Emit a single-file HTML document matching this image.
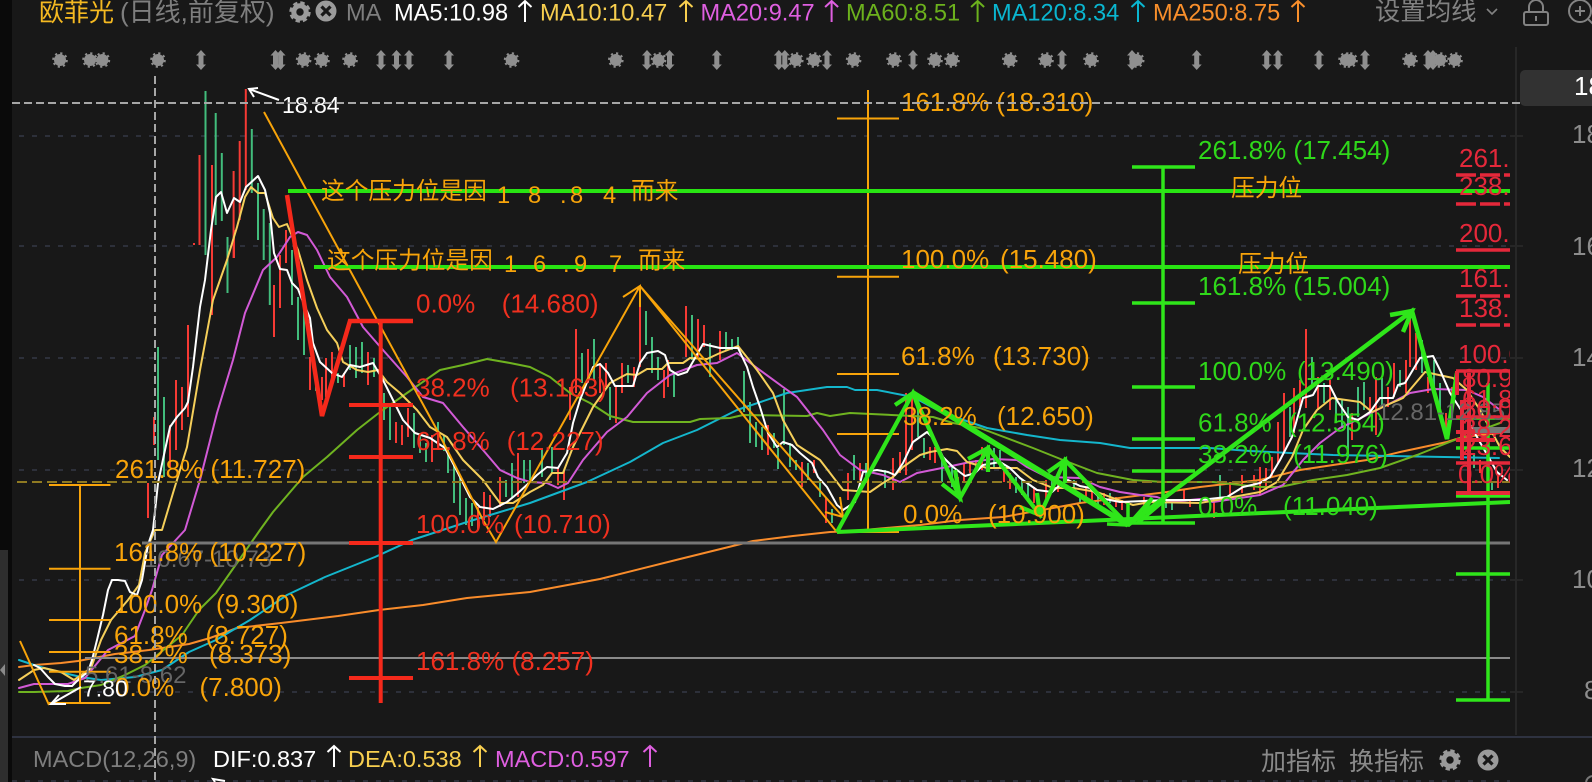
<!DOCTYPE html>
<html><head><meta charset="utf-8"><title>欧菲光</title>
<style>
html,body{margin:0;padding:0;background:#181818;overflow:hidden}
svg{display:block}
text{font-family:"Liberation Sans","Noto Sans CJK SC",sans-serif;white-space:pre}
.f{font-size:26px}
.o{fill:#f8a40a}.r{fill:#f0301f}.g{fill:#2fd81a}.c{fill:#e5283a;font-size:26px}
.h{font-size:23.6px}
.l{fill:none;stroke-linejoin:round;stroke-linecap:round}
</style></head><body>
<svg xmlns="http://www.w3.org/2000/svg" width="1592" height="782" viewBox="0 0 1592 782">
<defs>
<clipPath id="cp"><rect x="12" y="40" width="1498" height="700"/></clipPath>
<g id="s"><circle r="6" fill="#8f8f8f"/><circle r="6.8" fill="none" stroke="#8f8f8f" stroke-width="2" stroke-dasharray="2.2 3.14"/></g>
<polygon id="a" points="0,-10 5,-4.500 2.500,-4.500 2.500,4.500 5,4.500 0,10 -5,4.500 -2.500,4.500 -2.500,-4.500 -5,-4.500" fill="#8f8f8f"/>
<path id="u" d="M0 22V1M-6.500 7L0 1L6.500 7" fill="none" stroke="currentColor" stroke-width="2"/>
<g id="gear"><circle r="6.2" fill="none" stroke="#9a9a9a" stroke-width="5"/><circle r="9" fill="none" stroke="#9a9a9a" stroke-width="3.4" stroke-dasharray="4.2 2.87"/></g>
<g id="x"><circle r="10.5" fill="#9a9a9a"/><path d="M-4.500 -4.500L4.500 4.500M4.500 -4.500L-4.500 4.500" stroke="#181818" stroke-width="3.2"/></g>
</defs>
<rect width="1592" height="782" fill="#181818"/>
<rect x="0" y="0" width="12" height="782" fill="#0a0a0a"/>
<rect x="0" y="550" width="8" height="232" fill="#2e2e2e"/>
<polygon points="5,664 5,676 0,670" fill="#8a8a8a"/>

<!-- grid -->
<g stroke="#343845" stroke-width="1.5" stroke-dasharray="5 8" fill="none">
<path d="M19 136H1510M19 246H1510M19 358H1510M19 470H1510M19 580H1510M19 692H1510M12 781H1510"/>
</g>
<path d="M1510 136H1523M1510 246H1523M1510 358H1523M1510 470H1523M1510 580H1523M1510 692H1523" stroke="#2a2a2a" stroke-width="1.5"/>
<path d="M1516 47V735" stroke="#272727" stroke-width="2"/>
<path d="M12 737H1592" stroke="#2e3240" stroke-width="2"/>

<!-- marks -->
<g>
<use href="#s" x="60" y="60"/><use href="#s" x="90" y="60"/><use href="#s" x="102.4" y="60"/><use href="#s" x="158" y="60"/><use href="#a" x="201" y="60"/><use href="#a" x="275.5" y="60"/><use href="#a" x="280.6" y="60"/><use href="#s" x="303.6" y="60"/><use href="#s" x="322" y="60"/><use href="#s" x="350" y="60"/><use href="#a" x="381" y="60"/><use href="#a" x="396.5" y="60"/><use href="#a" x="409" y="60"/><use href="#a" x="449" y="60"/><use href="#s" x="511.6" y="60"/><use href="#s" x="615.8" y="60"/><use href="#a" x="647" y="60"/><use href="#s" x="658.5" y="60"/><use href="#a" x="669.5" y="60"/><use href="#a" x="716.8" y="60"/><use href="#a" x="778.8" y="60"/><use href="#a" x="784.8" y="60"/><use href="#s" x="795.8" y="60"/><use href="#s" x="814" y="60"/><use href="#a" x="827" y="60"/><use href="#s" x="853.6" y="60"/><use href="#s" x="894" y="60"/><use href="#a" x="913" y="60"/><use href="#s" x="935" y="60"/><use href="#s" x="952" y="60"/><use href="#s" x="1009.7" y="60"/><use href="#s" x="1046" y="60"/><use href="#a" x="1062" y="60"/><use href="#s" x="1091" y="60"/><use href="#a" x="1132" y="60"/><use href="#s" x="1136.7" y="60"/><use href="#a" x="1196.7" y="60"/><use href="#a" x="1266.7" y="60"/><use href="#a" x="1278" y="60"/><use href="#a" x="1319" y="60"/><use href="#s" x="1346" y="60"/><use href="#s" x="1350" y="60"/><use href="#a" x="1365" y="60"/><use href="#s" x="1410" y="60"/><use href="#a" x="1428" y="60"/><use href="#a" x="1433" y="60"/><use href="#s" x="1440" y="60"/><use href="#s" x="1455" y="60"/>
</g>

<!-- header -->
<text x="39" y="21" font-size="25" fill="#f5b921">欧菲光</text>
<text x="120" y="21" font-size="26" fill="#7e7e7e">(日线,前复权)</text>
<use href="#gear" x="300" y="12"/><use href="#x" x="326" y="11"/>
<text x="346" y="20.5" class="h" fill="#7e7e7e">MA</text>
<text x="394" y="20.5" class="h" fill="#fff">MA5:10.98</text><use href="#u" x="525" y="0" color="#fff"/>
<text x="540" y="20.5" class="h" fill="#f8cf4f">MA10:10.47</text><use href="#u" x="686" y="0" color="#f8cf4f"/>
<text x="700.5" y="20.5" class="h" fill="#df5fe0">MA20:9.47</text><use href="#u" x="831.6" y="0" color="#df5fe0"/>
<text x="846" y="20.5" class="h" fill="#6cb21d">MA60:8.51</text><use href="#u" x="977.6" y="0" color="#6cb21d"/>
<text x="992" y="20.5" class="h" fill="#0ab6d0">MA120:8.34</text><use href="#u" x="1138" y="0" color="#0ab6d0"/>
<text x="1153" y="20.5" class="h" fill="#f98f2b">MA250:8.75</text><use href="#u" x="1298" y="0" color="#f98f2b"/>
<text x="1375" y="20" font-size="25.4" fill="#828282">设置均线</text>
<path d="M1487 9L1492 14L1497 9" fill="none" stroke="#828282" stroke-width="1.6"/>
<g fill="none" stroke="#828282" stroke-width="2">
<rect x="1524" y="12" width="24" height="13" rx="2"/><path d="M1529 12V7a7 7 0 0 1 14 0V12"/><path d="M1536 16V21"/>
<circle cx="1580" cy="11" r="11"/><path d="M1575 11H1585M1580 6V16M1588 19L1594 25"/>
</g>

<g clip-path="url(#cp)">
<!-- candles -->
<path fill="none" stroke="#f63a34" stroke-width="2" d="M154 417V445M170 425V467M176 380V450M182 387V430M188 325V417M148 483V518M194 243V245M199.5 155V245M212 165V315M233.6 171V258M239.7 141V220M245.8 89V190M234 230V258M274 285V337M280 255V308M286 230V263M310 357V390M322 377V400M326 358V397M332 352V383M344 373V387M368 352V385M380 358V400M396 422V443M402 425V445M408 408V437M432 435V462M478 507V530M484 492V520M490 495V517M500 477V507M518 453V497M558 467V485M564 470V500M570 387V420M576 329V393M588 349V383M600 363V393M606 363V387M616 387V423M622 363V393M634 367V387M640 287V367M664 370V398M668 360V387M686 306V357M698 319V357M704 325V347M720 331V360M768 425V455M802 462V487M814 460V473M826 498V523M848 473V500M860 463V480M893 458V490M900 452V473M906 393V475M912 393V450M930 447V460M935 447V463M958 477V490M964 463V483M970 463V473M976 460V472M982 447V470M1004 467V482M1010 473V489M1034 487V503M1046 480V500M1058 475V492M1086 487V497M1092 490V500M1104 493V505M1116 497V507M1122 500V510M1144 497V517M1184 490V500M1190 500V507M1214 500V518M1230 482V497M1242 475V493M1254 475V490M1260 467V495M1266 468V490M1272 457V477M1278 422V463M1284 393V453M1294 388V433M1300 380V407M1306 329V408M1318 377V410M1330 380V410M1352 413V440M1370 397V413M1376 377V435M1388 387V407M1394 363V397M1406 360V393M1410 317V367M1416 333V370M1428 377V393M1446 413V430M1452 387V397M1480 460V473M1498 473V488"/>
<path fill="none" stroke="#42bd7c" stroke-width="2" d="M158 347V460M164 397V477M205.5 91V255M215.7 113V225M221.8 153V221M227.5 237V293M251.8 129V193M258 183V240M263.7 209V260M269.8 223V305M292 250V305M298 297V340M304 308V355M316 370V391M338 373V383M350 345V370M356 347V378M362 342V373M374 358V377M384 393V420M390 407V440M414 413V448M420 433V453M426 443V462M438 422V443M444 435V451M448 447V473M454 463V503M460 478V515M466 498V525M472 503V526M506 480V497M512 463V497M524 460V483M530 460V480M542 448V477M552 447V473M582 353V383M594 339V380M610 387V420M628 365V383M646 311V345M652 337V373M658 357V380M674 373V397M692 315V360M710 343V377M726 332V350M732 339V350M738 337V348M744 371V412M750 402V443M756 422V447M762 427V450M774 433V448M778 448V469M784 389V445M790 443V467M796 460V470M808 463V480M820 480V497M832 509V523M854 455V480M866 463V482M885 470V488M918 410V437M924 438V458M942 457V482M952 467V487M988 448V472M994 448V468M1000 450V467M1016 477V493M1022 480V495M1028 483V502M1038 493V513M1052 477V493M1064 460V483M1074 480V490M1080 493V503M1098 493V507M1110 493V503M1128 503V517M1166 500V508M1172 503V510M1220 475V497M1290 407V437M1312 357V387M1324 383V403M1336 397V423M1342 400V428M1348 407V457M1358 387V417M1364 382V410M1382 378V407M1400 370V387M1422 340V373M1434 360V393M1440 383V413M1474 453V468M1492 483V490"/>

<!-- MA lines -->
<path class="l" stroke="#f98c2b" stroke-width="2" d="M19 667L34 665L61 663L78 661L115 654L149 650L189 644L210 638L237 628L281 623L338 616L379 610L423 605L467 598L530 592L600 579L680 559L753 541L793 536L830 532L853 531L920 525L960 520L1003 517L1053 508L1080 503L1127 497L1167 492L1200 487L1260 480L1300 470L1333 465L1367 460L1400 452L1447 442L1463 437L1500 433"/>
<path class="l" stroke="#14b6cc" stroke-width="2" d="M19 660L34 665L51 670L81 677L101 680L135 677L162 670L189 652L216 640L250 620L287 595L325 577L375 557L412 540L467 522L530 503L587 482L630 462L663 443L697 430L737 410L787 393L827 387L847 387L855 390L877 390L913 397L943 413L987 428L1027 435L1060 440L1100 443L1130 448L1210 448L1250 451L1290 453L1333 455L1499 458"/>
<path class="l" stroke="#6fb320" stroke-width="2" d="M19 692L34 692L68 691L81 688L101 685L125 675L145 665L182 635L199 610L216 593L237 563L260 530L273 512L303 477L327 457L357 430L380 412L407 393L440 370L463 365L487 359L510 363L530 367L550 377L570 393L590 403L610 416L633 422L690 422L700 419L730 418L743 415L807 416L817 413L830 416L850 413L933 417L953 423L980 428L1033 448L1063 460L1097 473L1133 480L1163 482L1213 482L1260 487L1280 487L1313 480L1347 475L1380 468L1417 455L1447 443L1460 438L1473 433L1500 423"/>
<path class="l" stroke="#d25ad6" stroke-width="2" d="M19 688L34 684L68 684L85 678L108 650L135 636L145 610L152 590L162 555L185 530L200 480L217 413L233 360L245 313L263 270L277 257L290 237L298 232L307 235L317 250L330 277L347 297L363 327L383 350L407 377L423 397L443 403L463 427L483 450L500 470L517 478L530 482L547 483L558 488L568 483L583 460L607 432L627 417L647 393L670 375L697 365L717 363L737 353L753 365L783 387L797 397L823 430L840 455L860 470L883 475L900 482L917 473L947 467L970 462L993 459L1017 460L1027 467L1047 477L1080 478L1100 487L1120 492L1140 495L1157 497L1170 502L1200 499L1213 502L1260 495L1283 485L1303 460L1320 443L1340 428L1367 415L1393 402L1410 393L1433 389L1467 390L1483 397L1500 410"/>
<path class="l" stroke="#f5cf5a" stroke-width="2" d="M19 680L34 670L44 668L61 672L74 680L91 668L101 640L111 620L128 600L139 585L145 553L155 530L162 530L173 493L187 447L200 370L213 300L227 260L237 227L245 197L251 187L258 193L265 193L273 218L279 227L287 224L298 250L307 280L317 308L327 330L337 343L343 362L357 370L368 372L378 370L387 382L400 393L417 410L430 427L447 437L463 460L483 480L500 503L513 503L530 492L543 485L552 473L563 473L573 447L593 407L610 383L627 374L637 375L647 369L662 369L668 363L683 363L690 358L707 359L720 353L738 346L757 370L773 393L783 420L797 445L820 460L830 473L843 490L870 492L883 483L893 477L903 467L920 455L930 452L947 449L957 451L967 462L987 468L1017 468L1033 480L1053 488L1073 488L1097 492L1113 498L1133 505L1150 502L1200 503L1233 497L1260 492L1277 482L1292 457L1303 430L1317 410L1332 398L1360 402L1372 412L1387 405L1403 398L1425 372L1453 378L1467 390L1480 410L1487 423L1500 447L1510 457"/>
<path class="l" stroke="#fff" stroke-width="2" d="M34 665L40 668L48 677L55 684L65 686L72 686L80 678L88 672L92 660L97 640L103 615L108 590L112 580L118 580L125 581L130 592L137 595L142 580L148 545L153 530L158 483L165 450L170 427L177 417L185 408L188 402L193 367L200 307L205 280L211 230L216 197L221 192L227 213L234 198L240 202L246 187L258 176L265 190L270 213L274 253L280 269L287 270L292 283L298 289L303 302L310 318L313 343L320 362L332 373L342 377L350 365L360 367L373 363L383 380L393 400L403 420L415 433L430 438L445 448L458 473L470 497L480 507L493 509L507 502L518 493L530 482L537 475L547 467L558 468L567 453L573 423L580 400L593 367L600 364L608 373L615 386L633 386L640 363L647 353L658 351L665 355L670 370L678 375L687 372L703 344L720 348L738 348L747 367L753 387L760 407L768 433L777 447L783 442L792 445L800 453L812 463L818 477L827 487L837 505L843 510L855 502L863 472L877 470L888 472L895 475L903 463L913 442L927 432L935 440L943 457L953 467L965 476L975 473L983 465L1000 462L1010 468L1020 478L1037 490L1052 492L1060 485L1068 480L1080 486L1090 488L1100 498L1120 502L1167 500L1200 500L1227 497L1243 487L1260 483L1270 477L1280 460L1292 437L1303 398L1313 395L1318 386L1330 386L1338 402L1348 417L1358 420L1370 412L1380 398L1393 398L1398 385L1405 383L1420 358L1433 356L1440 370L1450 393L1463 413L1477 437L1497 472L1507 480"/>

<!-- horizontals -->
<path d="M17 482H1510" stroke="#8f7a22" stroke-width="2" stroke-dasharray="10 5"/>
<path d="M142 543H1510" stroke="#767676" stroke-width="3"/>
<path d="M85 658H1510" stroke="#8a8a8a" stroke-width="2"/>

<!-- gold drawings -->
<g fill="none" stroke="#f8a40a" stroke-width="2">
<path d="M264 112L377 320L437 430L483 520L496 542L640 286M623 297L640 286L640 307M640 286L836 531M640 286L843 517M825 512L843 517L840 497M20 641L49 705"/>
<path d="M80 485V703M49 485H110.500M49 568.700H110.500M49 620H110.500M49 652H110.500M49 671.700H110.500M49 703H110.500"/>
<path d="M868 90V532M837 118.500H899M837 276.700H899M837 374H899M837 434H899M837 532H899"/>
</g>

<!-- red drawings -->
<g fill="none" stroke="#f5291b">
<path d="M287 195L322 416L350 321H413" stroke-width="4.500" stroke-linejoin="miter"/>
<path d="M380.700 321V703" stroke-width="4"/>
<path d="M349 405H413M349 457H413M349 543H413M349 678H413" stroke-width="4"/>
</g>

<!-- green lines -->
<path d="M288 191H1510M314 267H1510" stroke="#28e412" stroke-width="4"/>
<g fill="none" stroke="#2fe61a">
<path d="M1163 167V523M1132 167H1195M1132 303H1195M1132 387H1195M1132 439H1195M1132 471H1195M1132 523H1195" stroke-width="3.500"/>
<path d="M1488 383V700M1456 418H1510M1456 448H1510M1456 496H1510M1456 574H1510M1456 700H1510" stroke-width="3.500"/>
<path d="M837 532L1510 502" stroke-width="4"/>
<path d="M837 532L913 393L960 498L988 448L1040 515L1065 460L1128 525M895 405L913 393L920 412M942 484L960 498L955 470M968 459L988 448L988 472M1020 507L1040 515L1037 493M1048 472L1065 460L1065 483" stroke-width="4.200"/>
<path d="M913 393L1128 525" stroke-width="5.500"/>
<path d="M1107 524L1128 525L1128 503M1128 525L1152 498L1138 523L1165 500" stroke-width="3.500"/>
<path d="M1128 525L1412 311L1447 439L1457 373M1390 315L1412 311L1403 332" stroke-width="4.500"/>
</g>

<!-- red right fib -->
<g fill="none" stroke="#e5283a">
<path d="M1456 175H1510M1456 204H1510M1456 296H1510M1456 325H1510" stroke-width="3.500" stroke-dasharray="20 4"/>
<path d="M1456 250H1510M1456 371H1510M1456 417H1510M1456 463H1510" stroke-width="3.500"/>
<path d="M1456 432H1500M1456 440H1495M1456 493H1510" stroke-width="4"/>
<path d="M1469 373V492M1457 371V395M1462 400V460" stroke-width="4"/>
</g>
<rect x="1473" y="427" width="37" height="6" fill="#777"/>

<!-- gray labels -->
<g font-size="24" fill="#666">
<text x="144" y="567">10.67-10.73</text>
<text x="85" y="683">5.61-8.62</text>
<text x="1377" y="420">12.81-12.85</text>
</g>

<!-- right red labels -->
<text x="1459" y="167" class="c">261.8</text>
<text x="1459" y="195" class="c">238.2</text>
<text x="1459" y="242" class="c">200.0</text>
<text x="1459" y="287" class="c">161.8</text>
<text x="1459" y="317" class="c">138.2</text>
<text x="1458" y="363" class="c">100.0</text>
<text x="1462" y="387" class="c">80.9</text>
<text x="1462" y="408" class="c">61.8</text>
<text x="1462" y="418" class="c">50.0</text>
<text x="1462" y="437" class="c">38.2</text>
<text x="1462" y="455" class="c">23.6</text>
<text x="1458" y="483" class="c">0.0%</text>
</g>

<!-- labels gold left -->
<g class="f o">
<text x="115" y="478">261.8% (11.727)</text>
<text x="114" y="561">161.8% (10.227)</text>
<text x="114" y="613">100.0%</text><text x="216" y="613">(9.300)</text>
<text x="114" y="644">61.8%</text><text x="205.500" y="644">(8.727)</text>
<text x="114" y="663">38.2%</text><text x="209" y="663">(8.373)</text>
<text x="115" y="696">0.0%</text><text x="199.500" y="696">(7.800)</text>
<text x="901" y="111">161.8% (18.310)</text>
<text x="901" y="268">100.0%</text><text x="1000" y="268">(15.480)</text>
<text x="901" y="365">61.8%</text><text x="993" y="365">(13.730)</text>
<text x="903" y="425">38.2%</text><text x="997" y="425">(12.650)</text>
<text x="903" y="523">0.0%</text><text x="988" y="523">(10.900)</text>
</g>
<g class="f r">
<text x="416" y="312.700">0.0%</text><text x="501.700" y="312.700">(14.680)</text>
<text x="416" y="396.700">38.2%</text><text x="510" y="396.700">(13.163)</text>
<text x="416" y="450">61.8%</text><text x="506.700" y="450">(12.227)</text>
<text x="416" y="533">100.0%</text><text x="514" y="533">(10.710)</text>
<text x="416" y="670">161.8%</text><text x="511.500" y="670">(8.257)</text>
</g>
<g class="f g">
<text x="1198" y="159">261.8% (17.454)</text>
<text x="1198" y="295">161.8% (15.004)</text>
<text x="1198" y="380">100.0%</text><text x="1297" y="380">(13.490)</text>
<text x="1198" y="431.700">61.8%</text><text x="1288" y="431.700">(12.554)</text>
<text x="1198" y="463">38.2%</text><text x="1293" y="463">(11.976)</text>
<text x="1198" y="515">0.0%</text><text x="1283" y="515">(11.040)</text>
</g>

<!-- Chinese notes -->
<g font-size="23.700" class="o">
<text x="321" y="199">这个压力位是因</text>
<text x="497" y="203">1</text><text x="528" y="203">8</text><text x="560" y="203">.</text><text x="570" y="203">8</text><text x="603" y="203">4</text>
<text x="631" y="199">而来</text>
<text x="327" y="268.500">这个压力位是因</text>
<text x="504" y="272">1</text><text x="533" y="272">6</text><text x="563" y="272">.</text><text x="574" y="272">9</text><text x="609" y="272">7</text>
<text x="638" y="268.500">而来</text>
<text x="1231" y="196">压力位</text>
<text x="1238" y="272">压力位</text>
</g>

<!-- white hi/lo -->
<text x="282" y="113" font-size="23" fill="#fff">18.84</text>
<path d="M279 100L249 89M258 88L249 89L254 97" fill="none" stroke="#fff" stroke-width="2"/>
<text x="83" y="696.500" font-size="23" fill="#fff">7.80</text>
<path d="M81 687L51 704M59 695L51 704L66 704" fill="none" stroke="#fff" stroke-width="2"/>

<!-- crosshair -->
<path d="M155 76V782" stroke="#a6a6a6" stroke-width="2" stroke-dasharray="8 4"/>
<path d="M12 103H1522" stroke="#a6a6a6" stroke-width="2" stroke-dasharray="8 4"/>

<!-- right axis -->
<rect x="1520" y="70" width="80" height="36" rx="5" fill="#323232"/>
<text x="1574" y="95" font-size="26" fill="#fff">18.84</text>
<g font-size="26" fill="#8c8c8c">
<text x="1572" y="143">18</text><text x="1572" y="255">16</text><text x="1572" y="366">14</text><text x="1572" y="477">12</text><text x="1572" y="588">10</text><text x="1584" y="699">8</text>
</g>

<!-- footer -->
<text x="33" y="767" font-size="23.500" fill="#7e7e7e">MACD(12,26,9)</text>
<text x="213" y="767" font-size="23.500" fill="#fff">DIF:0.837</text><use href="#u" x="334" y="745" color="#fff"/>
<text x="348" y="767" font-size="23.500" fill="#f8cf4f">DEA:0.538</text><use href="#u" x="480" y="745" color="#f8cf4f"/>
<text x="495" y="767" font-size="23.500" fill="#df5fe0">MACD:0.597</text><use href="#u" x="650" y="745" color="#df5fe0"/>
<text x="1261" y="770" font-size="25" fill="#8a8a8a">加指标</text>
<text x="1349" y="770" font-size="25" fill="#8a8a8a">换指标</text>
<use href="#gear" x="1450" y="760"/><use href="#x" x="1488" y="760"/>
<path d="M215 782L213 779L225 781" fill="none" stroke="#fff" stroke-width="2"/>
<path d="M1586 782a8 8 0 0 1 6 -6" fill="none" stroke="#777" stroke-width="2"/>
</svg>
</body></html>
